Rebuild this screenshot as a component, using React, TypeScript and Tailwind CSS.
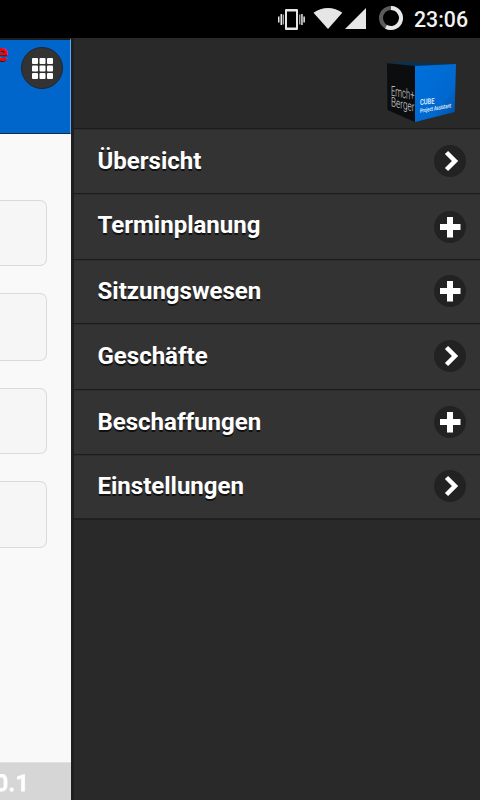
type MenuItem = {
  label: string;
  icon: "arrow" | "plus";
  height: string;
  text: string;
  circle: string;
};

const items: MenuItem[] = [
  { label: "Übersicht", icon: "arrow", height: "h-[65px]", text: "pt-[18px]", circle: "mt-[16px]" },
  { label: "Terminplanung", icon: "plus", height: "h-[66px]", text: "pt-[17px]", circle: "mt-[17px]" },
  { label: "Sitzungswesen", icon: "plus", height: "h-[64px]", text: "pt-[17px]", circle: "mt-[15px]" },
  { label: "Geschäfte", icon: "arrow", height: "h-[66px]", text: "pt-[18px]", circle: "mt-[16px]" },
  { label: "Beschaffungen", icon: "plus", height: "h-[65px]", text: "pt-[18px]", circle: "mt-[16px]" },
  { label: "Einstellungen", icon: "arrow", height: "h-[64px]", text: "pt-[17px]", circle: "mt-[15px]" },
];

const fields = ["h-[66px] mb-[27px]", "h-[68px] mb-[27px]", "h-[66px] mb-[27px]", "h-[67px]"];

function StatusBar() {
  return (
    <div className="flex h-[38px] shrink-0 items-start justify-end bg-black">
      <svg width="128" height="38" viewBox="276 0 128 38" aria-hidden="true">
        <g fill="#e6e6e6">
          <path fillRule="evenodd" d="M286 9h11q1 0 1 1v19q0 1-1 1h-11q-1 0-1-1V10q0-1 1-1zm1 2.500v16h9v-16z" />
          <path d="M278 16.500h1.500v6H278zM280.500 14h1.500v11h-1.500zM282.700 14.500h1v10h-1zM299.300 14.500h1v10h-1zM301.200 14h1.500v11h-1.500zM303.400 16.500h1.500v6h-1.500z" />
          <path d="M313.500 12.800C322 6.300 334 6.300 342.300 12.800L328 29z" />
          <path d="M345 29 366 8v21z" />
        </g>
        <circle cx="391" cy="18" r="10" fill="none" stroke="#5b5b5b" strokeWidth="4" />
        <path d="M391 8a10 10 0 1 1-5 18.660" fill="none" stroke="#e8e8e8" strokeWidth="4" />
      </svg>
      <span className="mr-[12px] ml-[10px] w-[54px] whitespace-nowrap pt-[8px] text-[21.300px] leading-[24px] font-medium text-[#f2f2f2]">
        23:06
      </span>
    </div>
  );
}

function CubeLogo() {
  return (
    <svg width="72" height="62" viewBox="386 61 72 62" aria-hidden="true">
      <defs>
        <linearGradient id="front" x1="0" y1="0" x2="1" y2="1">
          <stop offset="0" stopColor="#0070dc" />
          <stop offset=".65" stopColor="#0069d0" />
          <stop offset="1" stopColor="#004d9c" />
        </linearGradient>
      </defs>
      <path d="M387 63.200 408 62l48 2-41 2.500z" fill="#073255" />
      <path d="M387 63.200 415 66v56l-27.500-12z" fill="#0c0d0e" />
      <path d="M415 66l41-2-1.300 48L415 122z" fill="url(#front)" />
      <g fill="#d7dadd" fontFamily="Roboto, sans-serif">
        <text transform="matrix(1 .2 0 1 391 95.500)" fontSize="14" fontWeight="300" textLength="23.500" lengthAdjust="spacingAndGlyphs">Emch+</text>
        <text transform="matrix(1 .24 0 1 391 106)" fontSize="13" fontWeight="300" textLength="23.500" lengthAdjust="spacingAndGlyphs">Berger</text>
      </g>
      <g fill="#eef6ff" fontFamily="Roboto, sans-serif">
        <text transform="matrix(1 -.1 0 1 420 105)" fontSize="8" fontWeight="500" textLength="14.500" lengthAdjust="spacingAndGlyphs">CUBE</text>
        <text transform="matrix(1 -.18 0 1 420 113)" fontSize="6" fontWeight="500" textLength="31" lengthAdjust="spacingAndGlyphs">Project Assistant</text>
      </g>
    </svg>
  );
}

function MenuIcon({ icon }: { icon: MenuItem["icon"] }) {
  return (
    <svg width="32" height="32" viewBox="0 0 32 32" aria-hidden="true">
      <circle cx="16" cy="16" r="16" fill="#222" />
      {icon === "arrow" ? (
        <path d="M12.500 7.500 21 16l-8.500 8.500" fill="none" stroke="#fff" strokeWidth="4.500" />
      ) : (
        <path d="M13 6h6v7h7.500v6H19v7.500h-6V19H6v-6h7z" fill="#fff" />
      )}
    </svg>
  );
}

function ContentPage() {
  return (
    <main className="flex w-[71px] shrink-0 flex-col overflow-hidden bg-[#f9f9f9]">
      <header className="flex h-[96px] shrink-0 justify-between border-t-2 border-b border-r border-t-[#1b1d1f] border-b-[#172d45] border-r-[#65a7ec] bg-[#0066cc]">
        <div className="flex w-[8px] justify-end">
          <span className="-mt-px text-[24px] leading-[28px] font-bold text-[#f00] [text-shadow:0_1px_0_#222]">e</span>
        </div>
        <button className="mt-[7px] mr-[7px] grid size-[42px] place-content-center rounded-full border border-[#202831] bg-[#333]" aria-label="Menü">
          <svg width="21" height="21" viewBox="0 0 21 21" fill="#fff" aria-hidden="true">
            {[0, 7.500, 15].map((y) => [0, 7.500, 15].map((x) => <rect key={`${x}-${y}`} x={x} y={y} width="6" height="6" rx="1" />))}
          </svg>
        </button>
      </header>
      <div className="flex grow flex-col pt-[66px] pr-[24px]">
        {fields.map((size, i) => (
          <div key={i} className={`${size} shrink-0 rounded-r-[7px] border-y border-r border-[#dadada] bg-[#f6f6f6]`} />
        ))}
      </div>
      <footer className="flex h-[38px] shrink-0 justify-end border-t border-[#e2e2e2] bg-[#d6d6d6] pr-[42px]">
        <span className="pt-[6px] text-[24px] leading-[28px] font-bold whitespace-nowrap text-white [text-shadow:0_1px_0_#eee]">0.1</span>
      </footer>
    </main>
  );
}

export default function App() {
  return (
    <div className="flex h-[800px] w-[480px] flex-col overflow-hidden bg-[#292929] font-['Roboto',sans-serif]">
      <StatusBar />
      <div className="flex min-h-0 grow">
        <ContentPage />
        <aside className="flex grow flex-col border-l-[3px] border-[#1d1f20] bg-[#292929]">
          <div className="flex h-[90px] shrink-0 justify-end pt-[23px] pr-[22px]">
            <CubeLogo />
          </div>
          <nav className="border-b-2 border-[#1f1f1f]">
            {items.map((item) => (
              <a key={item.label} className={`${item.height} flex items-start justify-between border-t border-[#1c1c1c] bg-[#333] pr-[14px] pl-[23.500px] shadow-[inset_0_1px_0_#2d2d2d]`}>
                <span className={`${item.text} text-[24px] leading-[28px] font-bold text-white [text-shadow:0_2px_0_#111]`}>{item.label}</span>
                <span className={item.circle}>
                  <MenuIcon icon={item.icon} />
                </span>
              </a>
            ))}
          </nav>
        </aside>
      </div>
    </div>
  );
}
